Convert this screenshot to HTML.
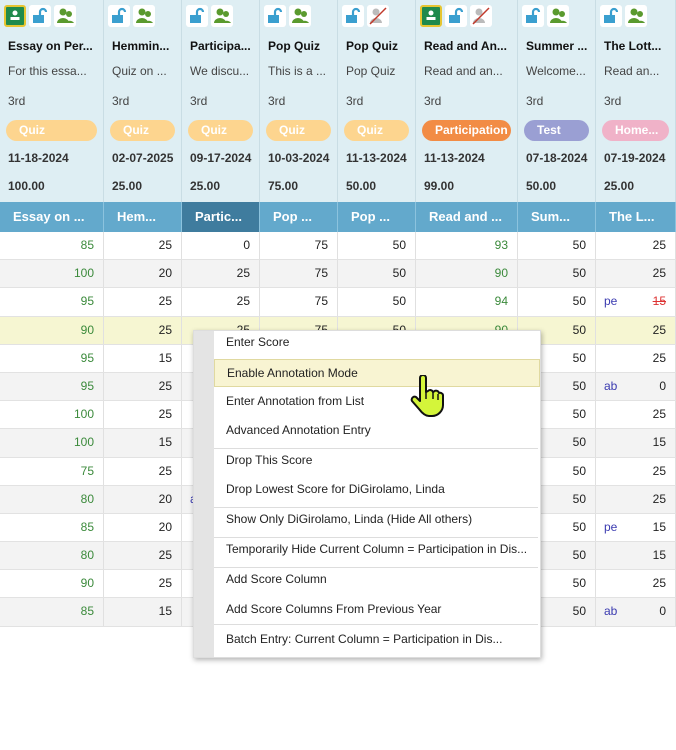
<!DOCTYPE html>
<html><head><meta charset="utf-8"><style>
*{box-sizing:border-box;margin:0;padding:0}
body{width:676px;height:750px;background:#fff;font-family:"Liberation Sans",Arial,sans-serif;font-size:12px;color:#222;position:relative;overflow:hidden}
.hb{position:absolute;left:0;top:0;width:676px;height:202px;background:#deeef3;display:flex}
.hc{border-right:1px solid #c9dde4;height:202px;position:relative;padding-left:8px;overflow:hidden;white-space:nowrap}
.ic{position:absolute;top:5px;left:4px;display:flex;gap:3px}
.i{width:22px;height:22px;background:#fff;border-radius:3px;position:relative}
.i.g{background:#1f8a4c;border:2px solid #e6c531}
.t{position:absolute;left:8px;font-size:12px}
.t1{top:39px;font-weight:bold;color:#111}
.t2{top:64px;color:#444}
.t3{top:94px;color:#444}
.pill{position:absolute;top:120px;left:6px;right:6px;height:21px;border-radius:11px;color:#fff;font-weight:bold;padding-left:13px;line-height:21px}
.t4{top:151px;font-weight:bold;color:#333}
.t5{top:179px;font-weight:bold;color:#333}
.bh{position:absolute;left:0;top:202px;width:676px;height:30px;background:#63a9cc;display:flex}
.bh div{border-right:1px solid #8cc3de;color:#fff;font-weight:bold;font-size:13px;line-height:30px;padding-left:13px;white-space:nowrap}
.rows{position:absolute;left:0;top:232px;width:676px}
.r{display:flex;height:28.2px;border-bottom:1px solid #e2e2e2}
.r:nth-child(even){background:#f3f3f3}
.r.y{background:#f6f6d2}
.r div{border-right:1px solid #e0e0e0;text-align:right;padding-right:9px;line-height:27px;font-size:12px;color:#222;position:relative}
.r .gr{color:#3b8a3b}
.a{position:absolute;left:8px;color:#3b3bb0;}
.menu{position:absolute;left:193px;top:330px;width:348px;height:328px;background:#fff;box-shadow:1px 2px 5px rgba(0,0,0,.3);border:1px solid #ddd}
.strip{position:absolute;left:0;top:0;width:20px;height:100%;background:#e4e4e4}
.mi{position:absolute;left:20px;right:0;height:28px;line-height:28px;padding-left:12px;color:#222;font-size:12px;white-space:nowrap}
.mi.h{background:#f8f4d2;border:1px solid #e0d9a0;line-height:26px}
.sep{position:absolute;left:20px;right:2px;height:1px;background:#ddd}
</style></head><body>
<div class="hb">
 <div class="hc" style="width:104px"><div class="ic"><div class="i g"><svg width="18" height="18" viewBox="0 0 18 18"><circle cx="9" cy="6" r="2.5" fill="#fff"/><rect x="4.5" y="10" width="9" height="3" fill="#fff"/></svg></div><div class="i"><svg width="22" height="22"><path d="M11 10V7a3 3 0 0 1 6 0" stroke="#3a9fcf" stroke-width="2.2" fill="none"/><rect x="4" y="10" width="11" height="8" fill="#3a9fcf"/></svg></div><div class="i"><svg width="22" height="22"><circle cx="9" cy="7" r="3.5" fill="#5a9a2e"/><circle cx="15" cy="9" r="3" fill="#5a9a2e"/><path d="M3 18a6 5 0 0 1 12 0z M11 18a5 4 0 0 1 9 0z" fill="#5a9a2e"/></svg></div></div>
  <div class="t t1">Essay on Per...</div><div class="t t2">For this essa...</div><div class="t t3">3rd</div><div class="pill" style="background:#fdd58f">Quiz</div><div class="t t4">11-18-2024</div><div class="t t5">100.00</div></div>
 <div class="hc" style="width:78px"><div class="ic"><div class="i"><svg width="22" height="22"><path d="M11 10V7a3 3 0 0 1 6 0" stroke="#3a9fcf" stroke-width="2.2" fill="none"/><rect x="4" y="10" width="11" height="8" fill="#3a9fcf"/></svg></div><div class="i"><svg width="22" height="22"><circle cx="9" cy="7" r="3.5" fill="#5a9a2e"/><circle cx="15" cy="9" r="3" fill="#5a9a2e"/><path d="M3 18a6 5 0 0 1 12 0z M11 18a5 4 0 0 1 9 0z" fill="#5a9a2e"/></svg></div></div>
  <div class="t t1">Hemmin...</div><div class="t t2">Quiz on ...</div><div class="t t3">3rd</div><div class="pill" style="background:#fdd58f">Quiz</div><div class="t t4">02-07-2025</div><div class="t t5">25.00</div></div>
 <div class="hc" style="width:78px"><div class="ic"><div class="i"><svg width="22" height="22"><path d="M11 10V7a3 3 0 0 1 6 0" stroke="#3a9fcf" stroke-width="2.2" fill="none"/><rect x="4" y="10" width="11" height="8" fill="#3a9fcf"/></svg></div><div class="i"><svg width="22" height="22"><circle cx="9" cy="7" r="3.5" fill="#5a9a2e"/><circle cx="15" cy="9" r="3" fill="#5a9a2e"/><path d="M3 18a6 5 0 0 1 12 0z M11 18a5 4 0 0 1 9 0z" fill="#5a9a2e"/></svg></div></div>
  <div class="t t1">Participa...</div><div class="t t2">We discu...</div><div class="t t3">3rd</div><div class="pill" style="background:#fdd58f">Quiz</div><div class="t t4">09-17-2024</div><div class="t t5">25.00</div></div>
 <div class="hc" style="width:78px"><div class="ic"><div class="i"><svg width="22" height="22"><path d="M11 10V7a3 3 0 0 1 6 0" stroke="#3a9fcf" stroke-width="2.2" fill="none"/><rect x="4" y="10" width="11" height="8" fill="#3a9fcf"/></svg></div><div class="i"><svg width="22" height="22"><circle cx="9" cy="7" r="3.5" fill="#5a9a2e"/><circle cx="15" cy="9" r="3" fill="#5a9a2e"/><path d="M3 18a6 5 0 0 1 12 0z M11 18a5 4 0 0 1 9 0z" fill="#5a9a2e"/></svg></div></div>
  <div class="t t1">Pop Quiz</div><div class="t t2">This is a ...</div><div class="t t3">3rd</div><div class="pill" style="background:#fdd58f">Quiz</div><div class="t t4">10-03-2024</div><div class="t t5">75.00</div></div>
 <div class="hc" style="width:78px"><div class="ic"><div class="i"><svg width="22" height="22"><path d="M11 10V7a3 3 0 0 1 6 0" stroke="#3a9fcf" stroke-width="2.2" fill="none"/><rect x="4" y="10" width="11" height="8" fill="#3a9fcf"/></svg></div><div class="i"><svg width="22" height="22"><circle cx="9" cy="7" r="3.5" fill="#bbb"/><path d="M3 18a6 5 0 0 1 12 0z" fill="#bbb"/><path d="M3 19L19 3" stroke="#c0392b" stroke-width="1.5"/></svg></div></div>
  <div class="t t1">Pop Quiz</div><div class="t t2">Pop Quiz</div><div class="t t3">3rd</div><div class="pill" style="background:#fdd58f">Quiz</div><div class="t t4">11-13-2024</div><div class="t t5">50.00</div></div>
 <div class="hc" style="width:102px"><div class="ic"><div class="i g"><svg width="18" height="18" viewBox="0 0 18 18"><circle cx="9" cy="6" r="2.5" fill="#fff"/><rect x="4.5" y="10" width="9" height="3" fill="#fff"/></svg></div><div class="i"><svg width="22" height="22"><path d="M11 10V7a3 3 0 0 1 6 0" stroke="#3a9fcf" stroke-width="2.2" fill="none"/><rect x="4" y="10" width="11" height="8" fill="#3a9fcf"/></svg></div><div class="i"><svg width="22" height="22"><circle cx="9" cy="7" r="3.5" fill="#bbb"/><path d="M3 18a6 5 0 0 1 12 0z" fill="#bbb"/><path d="M3 19L19 3" stroke="#c0392b" stroke-width="1.5"/></svg></div></div>
  <div class="t t1">Read and An...</div><div class="t t2">Read and an...</div><div class="t t3">3rd</div><div class="pill" style="background:#f28c45">Participation</div><div class="t t4">11-13-2024</div><div class="t t5">99.00</div></div>
 <div class="hc" style="width:78px"><div class="ic"><div class="i"><svg width="22" height="22"><path d="M11 10V7a3 3 0 0 1 6 0" stroke="#3a9fcf" stroke-width="2.2" fill="none"/><rect x="4" y="10" width="11" height="8" fill="#3a9fcf"/></svg></div><div class="i"><svg width="22" height="22"><circle cx="9" cy="7" r="3.5" fill="#5a9a2e"/><circle cx="15" cy="9" r="3" fill="#5a9a2e"/><path d="M3 18a6 5 0 0 1 12 0z M11 18a5 4 0 0 1 9 0z" fill="#5a9a2e"/></svg></div></div>
  <div class="t t1">Summer ...</div><div class="t t2">Welcome...</div><div class="t t3">3rd</div><div class="pill" style="background:#9a9fd3">Test</div><div class="t t4">07-18-2024</div><div class="t t5">50.00</div></div>
 <div class="hc" style="width:80px"><div class="ic"><div class="i"><svg width="22" height="22"><path d="M11 10V7a3 3 0 0 1 6 0" stroke="#3a9fcf" stroke-width="2.2" fill="none"/><rect x="4" y="10" width="11" height="8" fill="#3a9fcf"/></svg></div><div class="i"><svg width="22" height="22"><circle cx="9" cy="7" r="3.5" fill="#5a9a2e"/><circle cx="15" cy="9" r="3" fill="#5a9a2e"/><path d="M3 18a6 5 0 0 1 12 0z M11 18a5 4 0 0 1 9 0z" fill="#5a9a2e"/></svg></div></div>
  <div class="t t1">The Lott...</div><div class="t t2">Read an...</div><div class="t t3">3rd</div><div class="pill" style="background:#f0b2c8">Home...</div><div class="t t4">07-19-2024</div><div class="t t5">25.00</div></div>
</div>
<div class="bh">
 <div style="width:104px">Essay on ...</div><div style="width:78px">Hem...</div><div style="width:78px;background:#3f7c9e">Partic...</div><div style="width:78px">Pop ...</div><div style="width:78px">Pop ...</div><div style="width:102px">Read and ...</div><div style="width:78px">Sum...</div><div style="width:80px">The L...</div>
</div>
<div class="rows">
<div class="r"><div class="gr" style="width:104px">85</div><div style="width:78px">25</div><div style="width:78px">0</div><div style="width:78px">75</div><div style="width:78px">50</div><div class="gr" style="width:102px">93</div><div style="width:78px">50</div><div style="width:80px">25</div></div>
<div class="r"><div class="gr" style="width:104px">100</div><div style="width:78px">20</div><div style="width:78px">25</div><div style="width:78px">75</div><div style="width:78px">50</div><div class="gr" style="width:102px">90</div><div style="width:78px">50</div><div style="width:80px">25</div></div>
<div class="r"><div class="gr" style="width:104px">95</div><div style="width:78px">25</div><div style="width:78px">25</div><div style="width:78px">75</div><div style="width:78px">50</div><div class="gr" style="width:102px">94</div><div style="width:78px">50</div><div style="width:80px"><span class="a">pe</span><span style="color:#d33;text-decoration:line-through">15</span></div></div>
<div class="r y"><div class="gr" style="width:104px">90</div><div style="width:78px">25</div><div style="width:78px">25</div><div style="width:78px">75</div><div style="width:78px">50</div><div class="gr" style="width:102px">90</div><div style="width:78px">50</div><div style="width:80px">25</div></div>
<div class="r"><div class="gr" style="width:104px">95</div><div style="width:78px">15</div><div style="width:78px"></div><div style="width:78px"></div><div style="width:78px"></div><div style="width:102px"></div><div style="width:78px">50</div><div style="width:80px">25</div></div>
<div class="r"><div class="gr" style="width:104px">95</div><div style="width:78px">25</div><div style="width:78px"></div><div style="width:78px"></div><div style="width:78px"></div><div style="width:102px"></div><div style="width:78px">50</div><div style="width:80px"><span class="a">ab</span>0</div></div>
<div class="r"><div class="gr" style="width:104px">100</div><div style="width:78px">25</div><div style="width:78px"></div><div style="width:78px"></div><div style="width:78px"></div><div style="width:102px"></div><div style="width:78px">50</div><div style="width:80px">25</div></div>
<div class="r"><div class="gr" style="width:104px">100</div><div style="width:78px">15</div><div style="width:78px"></div><div style="width:78px"></div><div style="width:78px"></div><div style="width:102px"></div><div style="width:78px">50</div><div style="width:80px">15</div></div>
<div class="r"><div class="gr" style="width:104px">75</div><div style="width:78px">25</div><div style="width:78px"></div><div style="width:78px"></div><div style="width:78px"></div><div style="width:102px"></div><div style="width:78px">50</div><div style="width:80px">25</div></div>
<div class="r"><div class="gr" style="width:104px">80</div><div style="width:78px">20</div><div style="width:78px"><span class="a">a</span></div><div style="width:78px"></div><div style="width:78px"></div><div style="width:102px"></div><div style="width:78px">50</div><div style="width:80px">25</div></div>
<div class="r"><div class="gr" style="width:104px">85</div><div style="width:78px">20</div><div style="width:78px"></div><div style="width:78px"></div><div style="width:78px"></div><div style="width:102px"></div><div style="width:78px">50</div><div style="width:80px"><span class="a">pe</span>15</div></div>
<div class="r"><div class="gr" style="width:104px">80</div><div style="width:78px">25</div><div style="width:78px"></div><div style="width:78px"></div><div style="width:78px"></div><div style="width:102px"></div><div style="width:78px">50</div><div style="width:80px">15</div></div>
<div class="r"><div class="gr" style="width:104px">90</div><div style="width:78px">25</div><div style="width:78px"></div><div style="width:78px"></div><div style="width:78px"></div><div style="width:102px"></div><div style="width:78px">50</div><div style="width:80px">25</div></div>
<div class="r"><div class="gr" style="width:104px">85</div><div style="width:78px">15</div><div style="width:78px"></div><div style="width:78px"></div><div style="width:78px"></div><div style="width:102px"></div><div style="width:78px">50</div><div style="width:80px"><span class="a">ab</span>0</div></div>
</div>
<div class="menu"><div class="strip"></div>
<div class="mi" style="top:-3px">Enter Score</div>
<div class="sep" style="top:28px"></div>
<div class="mi h" style="top:28px">Enable Annotation Mode</div>
<div class="mi" style="top:56px">Enter Annotation from List</div>
<div class="mi" style="top:85px">Advanced Annotation Entry</div>
<div class="sep" style="top:117px"></div>
<div class="mi" style="top:115px">Drop This Score</div>
<div class="mi" style="top:144px">Drop Lowest Score for DiGirolamo, Linda</div>
<div class="sep" style="top:176px"></div>
<div class="mi" style="top:174px">Show Only DiGirolamo, Linda (Hide All others)</div>
<div class="sep" style="top:206px"></div>
<div class="mi" style="top:204px">Temporarily Hide Current Column = Participation in Dis...</div>
<div class="sep" style="top:236px"></div>
<div class="mi" style="top:234px">Add Score Column</div>
<div class="mi" style="top:264px">Add Score Columns From Previous Year</div>
<div class="sep" style="top:293px"></div>
<div class="mi" style="top:294px">Batch Entry: Current Column = Participation in Dis...</div>
</div>
<svg style="position:absolute;left:408px;top:375px" width="36" height="44" viewBox="0 0 36 44"><path d="M12 3a3 3 0 0 1 6 0v14l2-1a3 3 0 0 1 5 1l1-.5a3 3 0 0 1 5 1.5a3 3 0 0 1 4 2v10c0 6-5 11-11 11h-3c-4 0-7-3-10-7l-7-8a3 3 0 0 1 4-4l4 4z" fill="#d4f53a" stroke="#111" stroke-width="2" stroke-linejoin="round"/><path d="M18 17v7M25 17v7M30 19v6" stroke="#111" stroke-width="1.5"/></svg>
</body></html>
